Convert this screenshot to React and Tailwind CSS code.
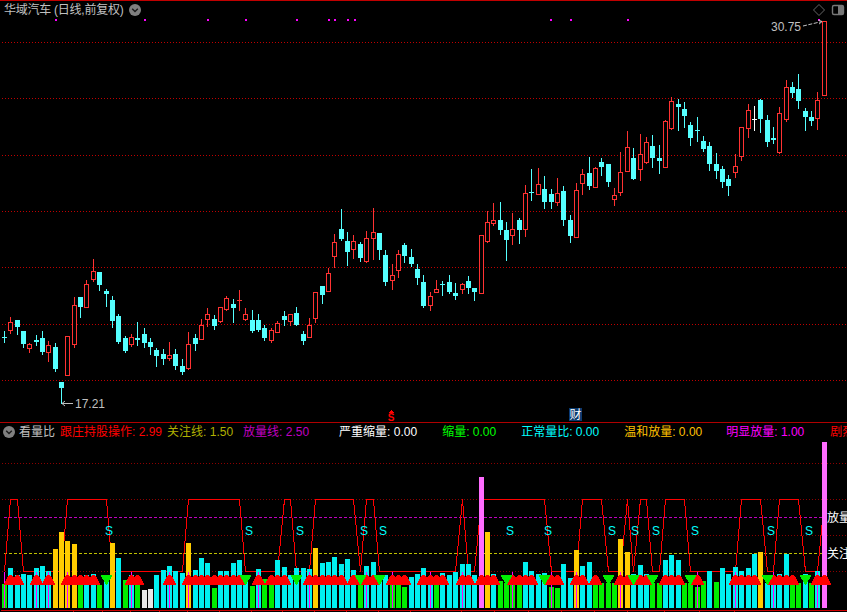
import React from 'react';

// candles: [type, bodyTop, bodyBottom, wickTop, wickBottom]
const CANDLES = [
  ['c',337,338,331,342],['r',322,330,317,333],['c',320,327,320,334],['c',331,344,331,347],['r',344,348,343,352],
  ['c',340,342,335,345],['c',338,352,331,354],['r',345,352,341,361],['c',347,369,343,371],['c',382,388,382,403],
  ['r',336,375,336,375],['r',305,344,297,347],['c',297,307,297,317],['r',284,307,280,307],['r',271,279,259,281],
  ['c',272,285,272,290],['c',291,294,289,306],['c',300,321,296,327],['c',316,342,314,343],['c',338,351,336,352],
  ['r',337,344,334,346],['c',338,340,322,345],['c',334,343,328,347],['c',342,347,338,354],['c',350,356,348,366],
  ['c',354,359,349,364],['r',355,358,342,360],['c',354,366,349,369],['c',366,372,359,374],['r',344,368,332,369],
  ['c',338,344,334,350],['r',325,339,319,339],['r',314,319,308,326],['c',319,326,315,329],['r',307,321,307,322],
  ['r',298,309,296,310],['c',304,308,299,322],['r',300,300,290,310],['r',314,319,308,320],['c',320,331,310,332],
  ['c',320,330,314,331],['c',328,338,325,340],['r',330,340,328,342],['r',323,332,321,332],['c',316,320,311,325],
  ['r',314,321,314,325],['c',313,325,307,325],['c',334,341,331,344],['r',325,337,318,337],['r',292,318,292,322],
  ['c',286,295,286,303],['r',273,291,268,291],['r',242,256,234,267],['c',229,239,209,240],['c',241,252,232,265],
  ['r',241,249,235,258],['c',244,258,242,261],['r',238,261,231,262],['r',232,238,208,259],['c',233,250,233,259],
  ['c',255,282,250,285],['r',275,280,264,289],['r',254,270,250,277],['c',245,256,243,262],['c',257,264,249,266],
  ['c',269,278,264,284],['c',282,306,275,307],['r',296,305,292,310],['r',289,292,280,292],['c',284,285,281,295],
  ['c',282,292,275,293],['c',293,296,283,299],['r',284,289,283,293],['c',281,288,276,293],['c',288,292,288,300],
  ['r',235,293,235,293],['r',222,241,211,242],['r',220,223,203,225],['c',220,230,202,234],['c',230,240,222,260],
  ['r',229,235,213,244],['c',220,230,218,243],['r',193,229,185,236],['c',192,193,169,200],['r',184,194,168,194],
  ['c',189,202,176,208],['c',194,202,189,208],['r',193,202,178,205],['c',191,220,186,225],['c',220,236,215,242],
  ['r',190,237,183,237],['r',174,183,169,194],['c',173,186,157,189],['r',168,187,167,187],['c',162,167,158,175],
  ['c',164,182,164,186],['r',195,199,188,205],['r',172,192,152,195],['r',147,171,131,171],['c',158,179,148,179],
  ['r',154,169,134,180],['r',142,162,137,163],['c',146,158,135,167],['c',158,161,145,173],['r',121,167,120,167],
  ['r',101,128,97,129],['c',104,107,99,130],['c',109,116,102,127],['c',125,138,122,145],['c',130,131,117,141],
  ['c',141,149,136,151],['c',146,164,142,170],['c',164,171,153,178],['c',169,182,166,187],['c',179,186,175,195],
  ['r',166,172,154,177],['r',127,156,127,160],['r',110,128,104,137],['w',119,120,106,130],['c',100,119,99,132],
  ['c',120,142,115,146],['c',138,140,127,143],['r',113,152,107,153],['r',87,119,80,121],['c',87,93,82,97],
  ['c',89,101,74,108],['c',111,117,108,130],['c',117,121,111,125],['r',100,118,92,129],['r',21,95,21,95],
];

// volume bars: [type, top]  c=cyan g=green y=gold w=white p=pink
const BARS = [
  ['g',584],['c',568],['c',575],['c',574],['c',575],['c',568],['c',566],['c',571],['y',549],['y',532],
  ['y',541],['y',544],['g',580],['c',575],['c',574],['g',585],['c',580],['y',543],['c',558],['g',580],
  ['c',575],['g',584],['w',590],['w',589],['c',575],['c',570],['c',566],['c',571],['c',573],['y',543],
  ['c',570],['c',558],['c',563],['g',588],['c',571],['c',571],['c',563],['c',560],['c',575],['g',586],
  ['c',569],['g',579],['g',584],['c',560],['c',567],['c',575],['c',568],['c',568],['c',569],['y',548],
  ['c',563],['c',562],['c',557],['c',564],['c',559],['c',570],['g',575],['c',566],['c',562],['c',575],
  ['c',575],['g',584],['g',584],['g',587],['c',577],['c',574],['c',568],['c',577],['g',583],['c',573],
  ['c',575],['c',572],['c',564],['c',564],['c',575],['p',477],['y',532],['c',574],['g',581],['g',583],
  ['g',583],['g',583],['c',562],['c',571],['c',574],['c',573],['g',587],['g',588],['c',564],['c',578],
  ['y',550],['c',566],['c',562],['g',583],['g',583],['g',583],['g',583],['y',539],['y',552],['c',574],
  ['c',565],['c',574],['g',583],['g',583],['c',560],['c',555],['c',560],['g',583],['g',583],['g',587],
  ['g',581],['c',571],['g',582],['c',568],['c',574],['c',567],['c',571],['c',568],['c',554],['y',552],
  ['c',583],['c',583],['c',574],['c',554],['g',585],['g',583],['c',574],['g',583],['c',571],['p',442],
];

const BODY_FILL = { c: '#55ffff', w: '#ffffff' };
const BAR_FILL = { c: '#00f0f0', g: '#00ee00', y: '#ffcc00', w: '#e8e8e8', p: '#ff6cff' };

const UP_MARKS = [1,2,5,7,10,11,12,13,14,20,21,26,29,30,31,32,33,34,35,36,37,40,42,43,44,48,49,50,51,52,53,55,57,58,61,62,63,66,67,68,69,72,73,75,76,77,80,81,82,83,86,87,90,91,93,97,98,100,101,104,105,106,109,115,116,117,118,121,122,123,124,128,129];
const DOWN_MARKS = [16,38,46,56,59,79,85,95,99,102,108,120,126];
const THIN_LINES = [0,5,7,10,20,26,29,40,48,57,61,67,72,80,86,90,97,109,115,121,128];
const HIGH_RUNS = [[1,2],[10,16],[29,37],[44,45],[49,55],[57,58],[72,72],[75,85],[91,94],[98,98],[100,101],[104,107],[116,119],[122,125],[129,129]];
const S_MARKS = [109,249,300,364,383,510,548,612,635,656,695,771,809];
const TICKS = [73,102,130,159,187,219,251,282,314,346,378,410,461,494,528,561,594,627,664,699,734];
const TOP_DOTS = [55,144,207,245,296,328,334,347,354,550,570,627,818];

const barX = (i) => Math.floor(4.3 + i * 6.357);

const trendPoints = BARS.map((_, i) => {
  const high = HIGH_RUNS.some(([a, b]) => i >= a && i <= b);
  return `${barX(i) + 0.5},${high ? 499.5 : 571.5}`;
}).join(' ');

const ChevronButton = () => (
  <svg width="12" height="12" viewBox="0 0 12 12" className="shrink-0">
    <circle cx="6" cy="6" r="6" fill="#808080" />
    <path d="M3.2 4.8 L6 7.6 L8.8 4.8" fill="none" stroke="#1c1c1c" strokeWidth="1.4" />
  </svg>
);

const Candle = ({ i, data }) => {
  const [type, top, bottom, wickTop, wickBottom] = data;
  const x = barX(i);
  if (type === 'r') {
    return (
      <g>
        <rect x={x} y={wickTop} width="1" height={wickBottom - wickTop + 1} fill="#ff3232" />
        <rect x={x - 2} y={top} width="5" height={Math.max(bottom - top + 1, 1)} fill="#ff3232" />
        {bottom - top >= 2 && <rect x={x - 1} y={top + 1} width="3" height={bottom - top - 1} fill="#000" />}
      </g>
    );
  }
  return (
    <g fill={BODY_FILL[type]}>
      <rect x={x} y={wickTop} width="1" height={wickBottom - wickTop + 1} />
      <rect x={x - 2} y={top} width="5" height={bottom - top} />
    </g>
  );
};

const MainChart = () => (
  <section className="relative h-[422px] shrink-0 border-t border-[#c00000]">
    <svg width="847" height="421" viewBox="0 1 847 421" shapeRendering="crispEdges" className="block">
      {[42, 98, 155, 211, 267, 324, 380].map((y) => (
        <line key={y} x1="2" x2="847" y1={y + 0.5} y2={y + 0.5} stroke="#c00000" strokeDasharray="1 2" />
      ))}
      {TOP_DOTS.map((x) => (
        <rect key={x} x={x} y="19" width="2" height="2" fill="#ff00ff" />
      ))}
      {CANDLES.map((c, i) => (
        <Candle key={i} i={i} data={c} />
      ))}
      <g shapeRendering="auto" fill="none" stroke="#c0c0c0">
        <path d="M62 403.5 H73 M62 403.5 L65 401 M62 403.5 L65 406" />
        <path d="M803 26 L822 21.5 M822 21.5 L817 19.5 M822 21.5 L818 25" strokeDasharray="4 1.5" />
      </g>
      <g fill="#c0c0c0" fontSize="12" shapeRendering="auto">
        <text x="75" y="408">17.21</text>
        <text x="771" y="31">30.75</text>
      </g>
      <g shapeRendering="auto">
        <path d="M819 4.5 L824.5 10 L819 15.5 L813.5 10 Z" fill="none" stroke="#666" />
        <rect x="832.5" y="5.5" width="11" height="9" rx="1.5" fill="none" stroke="#777" strokeWidth="1.4" />
        <rect x="838" y="6" width="5" height="8" fill="#777" />
      </g>
      {/* marks above the divider */}
      <path d="M391 410 L394 413 H388 Z" fill="#ff0000" />
      <text x="391" y="420.5" textAnchor="middle" fill="#ff0000" fontSize="10" fontWeight="700" shapeRendering="auto">S</text>
    </svg>
    <div className="absolute left-[4px] top-0 flex h-[18px] items-center gap-[6px] text-[12px] tracking-[-0.25px] text-[#c0c0c0]">
      <span className="whitespace-nowrap">华域汽车 (日线,前复权)</span>
      <ChevronButton />
    </div>
    <span className="absolute left-[569px] top-[407px] flex h-[13px] w-[13px] items-center justify-center bg-[#0a3a6e] text-[12px] text-white">财</span>
  </section>
);

const LEGEND = [
  { label: '跟庄持股操作: 2.99', className: 'ml-[5px] text-[#ff0000]' },
  { label: '关注线: 1.50', className: 'ml-[5px] text-[#b0b000]' },
  { label: '放量线: 2.50', className: 'ml-[10px] text-[#c000c0]' },
  { label: '严重缩量: 0.00', className: 'ml-[30px] text-white' },
  { label: '缩量: 0.00', className: 'ml-[25px] text-[#00ff00]' },
  { label: '正常量比: 0.00', className: 'ml-[25px] text-[#00ffff]' },
  { label: '温和放量: 0.00', className: 'ml-[25px] text-[#ffc000]' },
  { label: '明显放量: 1.00', className: 'ml-[24px] text-[#ff00ff]' },
  { label: '剧烈放量: 0.00', className: 'ml-[26px] text-[#ff0000]' },
];

const VolumePanel = () => (
  <section className="relative min-h-0 flex-1 overflow-hidden border-t border-[#b00000]">
    <svg width="847" height="189" viewBox="0 423 847 189" shapeRendering="crispEdges" className="absolute left-0 top-0">
      {[463, 499, 535, 571].map((y) => (
        <line key={y} x1="2" x2="847" y1={y + 0.5} y2={y + 0.5} stroke="#8c0000" strokeDasharray="1 2" />
      ))}
      <line x1="4" x2="822" y1="517.5" y2="517.5" stroke="#c000c0" strokeDasharray="3 2" />
      <line x1="4" x2="822" y1="553.5" y2="553.5" stroke="#c0c000" strokeDasharray="3 2" />
      <polyline points={trendPoints} fill="none" stroke="#ff0000" />
      {BARS.map(([type, top], i) => (
        <rect key={i} x={barX(i) - 2} y={top} width="5" height={608 - top} fill={BAR_FILL[type]} />
      ))}
      {THIN_LINES.map((i) => (
        <rect key={i} x={barX(i)} y="572" width="1" height="36" fill="#ff00ff" />
      ))}
      {UP_MARKS.map((i) => {
        const x = barX(i) + 0.5;
        return (
          <polygon
            key={i}
            points={`${x - 1},575 ${x + 1},575 ${x + 3.5},578 ${x + 6.5},584.5 ${x - 6.5},584.5 ${x - 3.5},578`}
            fill="#ff0000"
          />
        );
      })}
      {DOWN_MARKS.map((i) => {
        const x = barX(i) + 0.5;
        return <polygon key={i} points={`${x - 6.5},574.5 ${x + 6.5},574.5 ${x + 0.5},584.5 ${x - 0.5},584.5`} fill="#00ee00" />;
      })}
      {S_MARKS.map((x) => (
        <text key={x} x={x} y="535" textAnchor="middle" fontSize="12" fill="#00ffff" shapeRendering="auto">S</text>
      ))}
      <rect x="1" y="610" width="846" height="1" fill="#d00000" />
      {TICKS.map((x) => (
        <rect key={x} x={x} y="611" width="1" height="1" fill="#d00000" />
      ))}
      <g fontSize="12" fill="#ffffff" shapeRendering="auto">
        <text x="827" y="522">放量</text>
        <text x="827" y="558">关注</text>
      </g>
    </svg>
    <div className="relative flex h-[17px] items-center whitespace-nowrap pl-[3px] text-[12px]">
      <ChevronButton />
      <span className="ml-[4px] shrink-0 text-[#c0c0c0]">看量比</span>
      {LEGEND.map((item) => (
        <span key={item.label} className={`shrink-0 ${item.className}`}>{item.label}</span>
      ))}
    </div>
  </section>
);

export default function App() {
  return (
    <div className="flex h-[612px] w-[847px] flex-col overflow-hidden bg-black font-['Liberation_Sans','Noto_Sans_CJK_SC',sans-serif]">
      <MainChart />
      <VolumePanel />
    </div>
  );
}
